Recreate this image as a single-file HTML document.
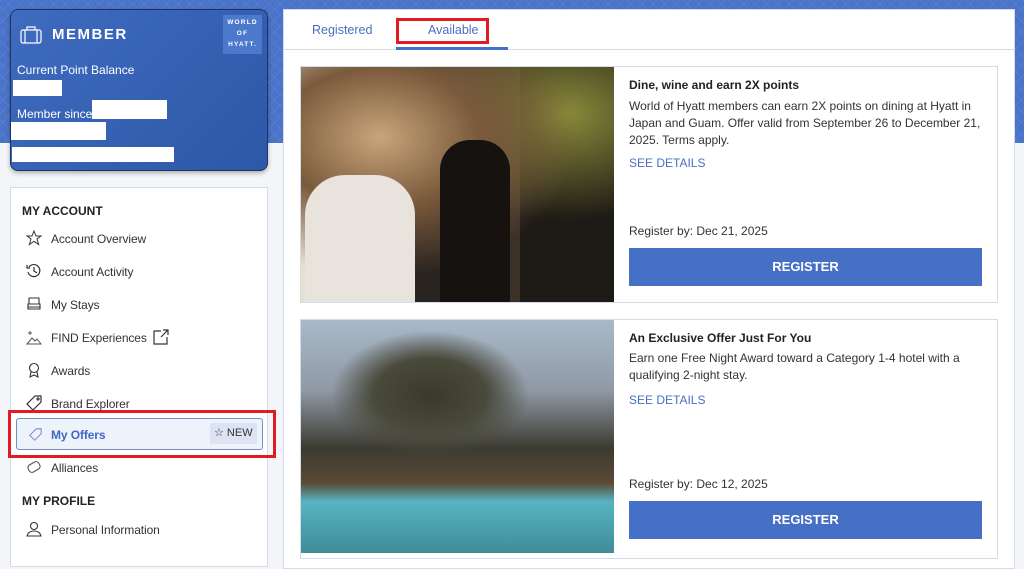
<!DOCTYPE html>
<html><head><meta charset="utf-8"><style>
*{box-sizing:border-box;margin:0;padding:0}
body{width:1024px;height:553px;overflow:hidden;font-family:"Liberation Sans",sans-serif;background:#f3f5f9;position:relative;color:#222}
.bluebg{position:absolute;left:0;top:0;width:1024px;height:143px;background:#4a74c9;background-image:repeating-linear-gradient(45deg,rgba(255,255,255,.06) 0 1px,transparent 1px 8px),repeating-linear-gradient(-45deg,rgba(255,255,255,.06) 0 1px,transparent 1px 8px)}
.card{position:absolute;left:10px;top:9px;width:258px;height:162px;border-radius:8px;background:linear-gradient(135deg,#3f6bc0,#2d58a8);border:1px solid #1e3560;box-shadow:0 2px 5px rgba(0,0,0,.3);color:#fff}
.w{position:absolute;background:#fff}
.side{position:absolute;left:10px;top:187px;width:258px;height:380px;background:#fff;border:1px solid #d3dbe8}
.side .h{position:absolute;left:11px;font-size:12px;font-weight:bold;color:#222}
.side .it{position:absolute;left:40px;font-size:12px;color:#333;letter-spacing:-0.1px}
.side svg{position:absolute;left:15px}
.panel{position:absolute;left:283px;top:9px;width:732px;height:560px;background:#fff;border:1px solid #d3dbe8}
.btn{position:absolute;left:629px;width:353px;height:38px;background:#4570c6;color:#fff;font-weight:bold;font-size:13px;text-align:center;line-height:38px}
.oc{position:absolute;left:300px;width:698px;border:1px solid #d3dbe8;background:#fff}
.t{position:absolute;left:629px;font-size:12px;color:#333;line-height:17px;width:355px}
</style></head><body>
<div class="bluebg"></div>
<div class="card">
 <svg style="position:absolute;left:9px;top:16px" width="22" height="18" viewBox="0 0 22 18" fill="none" stroke="#fff" stroke-width="1.2"><rect x="1" y="4" width="20" height="13" rx="2"/><path d="M7 4V1h8v3M5 4v13M17 4v13"/></svg>
 <div style="position:absolute;left:41px;top:16px;font-weight:bold;font-size:15px;letter-spacing:1.5px">MEMBER</div>
 <div style="position:absolute;left:212px;top:5px;width:39px;height:39px;background:#4c79cc;font-size:6.5px;font-weight:bold;line-height:11px;text-align:center;letter-spacing:1.2px;padding-top:2px">WORLD<br>OF<br>HYATT.</div>
 <div style="position:absolute;left:6px;top:53px;font-size:12px">Current Point Balance</div>
 <div class="w" style="left:2px;top:70px;width:49px;height:16px"></div>
 <div style="position:absolute;left:6px;top:97px;font-size:12px">Member since</div>
 <div class="w" style="left:81px;top:90px;width:75px;height:19px"></div>
 <div class="w" style="left:0;top:112px;width:95px;height:18px"></div>
 <div class="w" style="left:1px;top:137px;width:162px;height:15px"></div>
</div>
<div class="side">
 <div class="h" style="top:16px">MY ACCOUNT</div>
 <svg style="top:42px" width="16" height="16" viewBox="0 0 16 16" fill="none" stroke="#333" stroke-width="1"><path d="M8 1l2 5h5l-4 3 1.6 5.5L8 11.3 3.4 14.5 5 9 1 6h5z"/></svg><div class="it" style="top:44px">Account Overview</div>
 <svg style="top:75px" width="16" height="16" viewBox="0 0 16 16" fill="none" stroke="#333" stroke-width="1.2"><path d="M3 4a6 6 0 1 1-1 5"/><path d="M1 2v3h3M8 4v4l3 2"/></svg><div class="it" style="top:77px">Account Activity</div>
 <svg style="top:108px" width="16" height="16" viewBox="0 0 16 16" fill="none" stroke="#333" stroke-width="1.1"><path d="M3 2h10v6H3zM2 8h12v5H2zM2 11h12"/></svg><div class="it" style="top:110px">My Stays</div>
 <svg style="top:141px" width="16" height="16" viewBox="0 0 16 16" fill="none" stroke="#555" stroke-width="1"><path d="M1 15l5-6 3 3 2-2 4 5zM4 2v4M2 4h4"/></svg><div class="it" style="top:143px">FIND Experiences</div>
 <svg style="left:142px;top:141px" width="16" height="16" viewBox="0 0 16 16" fill="none" stroke="#333" stroke-width="1.2"><path d="M8 2H1v13h13V8M10 1h5v5M15 1L8 8"/></svg>
 <svg style="top:174px" width="16" height="16" viewBox="0 0 16 16" fill="none" stroke="#333" stroke-width="1.1"><circle cx="8" cy="6" r="4.5"/><path d="M5 10l-1 5 4-2 4 2-1-5"/></svg><div class="it" style="top:176px">Awards</div>
 <svg style="top:207px" width="16" height="16" viewBox="0 0 16 16" fill="none" stroke="#333" stroke-width="1.2"><path d="M9 1h6v6l-8 8-6-6z"/><circle cx="12" cy="4" r="1"/></svg><div class="it" style="top:209px">Brand Explorer</div>
 <div style="position:absolute;left:5px;top:230px;width:247px;height:32px;background:#eef2fa;border:1px solid #6f8fd0;border-radius:3px"></div>
 <svg style="left:18px;top:240px" width="13" height="13" viewBox="0 0 16 16" fill="none" stroke="#6f8fd0" stroke-width="1.3"><path d="M9 1h6v6l-8 8-6-6z"/></svg>
 <div class="it" style="top:240px;color:#3f68c2;font-weight:bold">My Offers</div>
 <div style="position:absolute;left:199px;top:235px;width:47px;height:21px;background:#dce4f3;font-size:11px;line-height:21px;color:#333;padding-left:4px">☆ NEW</div>
 <svg style="top:271px" width="16" height="16" viewBox="0 0 16 16" fill="none" stroke="#555" stroke-width="1.1"><rect x="2" y="4" width="12" height="8" rx="3" transform="rotate(-30 8 8)"/></svg><div class="it" style="top:273px">Alliances</div>
 <div class="h" style="top:306px">MY PROFILE</div>
 <svg style="top:333px" width="16" height="16" viewBox="0 0 16 16" fill="none" stroke="#333" stroke-width="1.1"><circle cx="8" cy="5" r="3.5"/><path d="M1 15c1-4 4-5 7-5s6 1 7 5z"/></svg><div class="it" style="top:335px">Personal Information</div>
</div>
<div style="position:absolute;left:8px;top:410px;width:268px;height:48px;border:3px solid #e01b22"></div>
<div class="panel">
 <div style="position:absolute;left:0;top:39px;width:730px;height:1px;background:#d3dbe8"></div>
 <div style="position:absolute;left:28px;top:13px;font-size:12.5px;color:#4a6fc0">Registered</div>
 <div style="position:absolute;left:144px;top:13px;font-size:12.5px;color:#4a6fc0">Available</div>
 <div style="position:absolute;left:112px;top:37px;width:112px;height:3px;background:#4570c6"></div>
 <div style="position:absolute;left:112px;top:8px;width:93px;height:26px;border:3px solid #e01b22"></div>
</div>
<div class="oc" style="top:66px;height:237px"></div>
<div style="position:absolute;left:301px;top:67px;width:313px;height:235px;background:radial-gradient(ellipse at 25% 30%,#c9a57a 0,#7a5a3c 30%,transparent 60%),radial-gradient(ellipse at 85% 20%,#8a8a3a 0,transparent 40%),linear-gradient(90deg,#e9e0d2 0 30%,#2a2420 30% 45%,#3b3128 45% 70%,#1e1a16 70%);"></div>
<div style="position:absolute;left:305px;top:175px;width:110px;height:127px;background:#e8e3dc;border-radius:40px 40px 0 0"></div>
<div style="position:absolute;left:440px;top:140px;width:70px;height:162px;background:#15120f;border-radius:30px 30px 0 0"></div>
<div class="t" style="top:77px;font-weight:bold;color:#222">Dine, wine and earn 2X points</div>
<div class="t" style="top:98px">World of Hyatt members can earn 2X points on dining at Hyatt in Japan and Guam. Offer valid from September 26 to December 21, 2025. Terms apply.</div>
<div class="t" style="top:155px;color:#4a6fc0">SEE DETAILS</div>
<div class="t" style="top:223px">Register by: Dec 21, 2025</div>
<div class="btn" style="top:248px">REGISTER</div>
<div class="oc" style="top:319px;height:240px"></div>
<div style="position:absolute;left:301px;top:320px;width:313px;height:233px;background:linear-gradient(180deg,#a9b8c8 0,#8f9aa5 30%,#3c3a30 55%,#5a4a36 70%,#57b4c2 78%,#3f8c98 100%)"></div>
<div style="position:absolute;left:330px;top:330px;width:200px;height:130px;background:radial-gradient(ellipse,#3a3a2c 0,#4a4a3c 40%,transparent 70%)"></div>
<div class="t" style="top:330px;font-weight:bold;color:#222">An Exclusive Offer Just For You</div>
<div class="t" style="top:350px">Earn one Free Night Award toward a Category 1-4 hotel with a qualifying 2-night stay.</div>
<div class="t" style="top:392px;color:#4a6fc0">SEE DETAILS</div>
<div class="t" style="top:476px">Register by: Dec 12, 2025</div>
<div class="btn" style="top:501px">REGISTER</div>
</body></html>
